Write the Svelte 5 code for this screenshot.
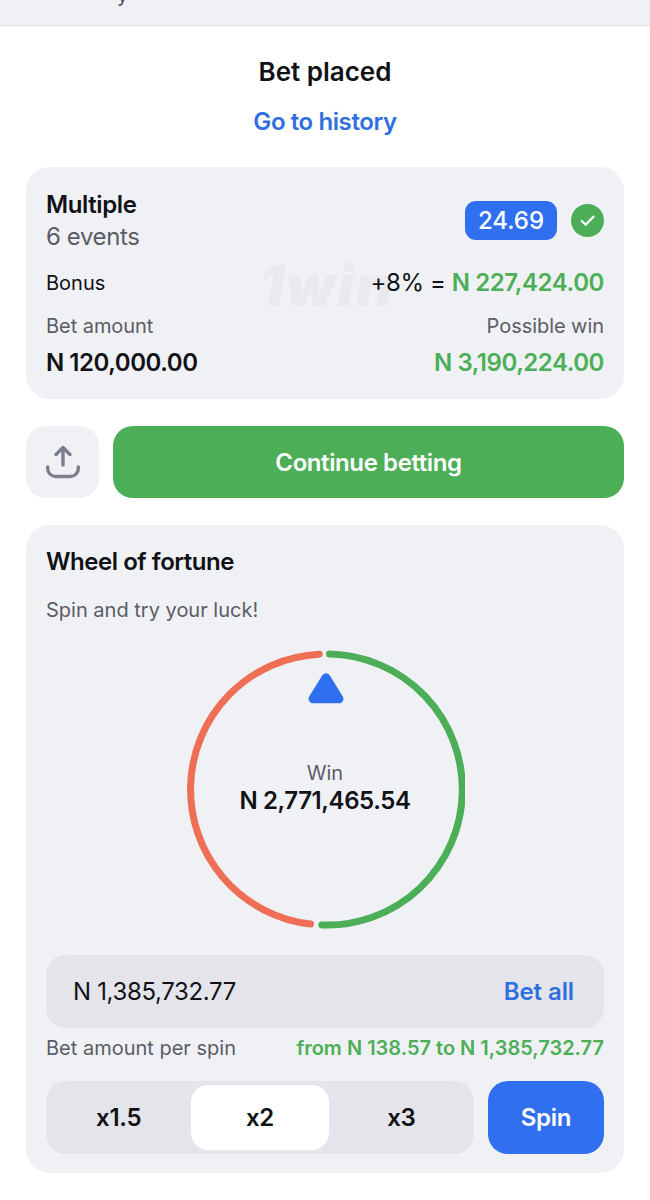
<script>
  const multipliers = ['x1.5', 'x2', 'x3'];
  let active = $state('x2');
</script>

<div class="page">
  <header class="topbar"><span class="crumb">y</span></header>

  <div class="head">
    <h1>Bet placed</h1>
    <a class="link" href="#history">Go to history</a>
  </div>

  <section class="card summary">
    <span class="mark">1win</span>
    <div class="row top">
      <div class="stack">
        <strong class="title">Multiple</strong>
        <span class="muted events">6 events</span>
      </div>
      <div class="odds">
        <span class="badge">24.69</span>
        <svg class="check" viewBox="0 0 33 33" aria-hidden="true">
          <circle cx="16.5" cy="16.5" r="16.5" fill="#4caf57" />
          <path d="M10.8 17l3.9 3.8 7.700-8" fill="none" stroke="#fff" stroke-width="2.300" stroke-linecap="round" stroke-linejoin="round" />
        </svg>
      </div>
    </div>
    <div class="row bonus">
      <span class="label">Bonus</span>
      <span class="sum">+8% = <b class="green">N 227,424.00</b></span>
    </div>
    <div class="row captions">
      <span class="muted">Bet amount</span>
      <span class="muted">Possible win</span>
    </div>
    <div class="row amounts">
      <b>N 120,000.00</b>
      <b class="green">N 3,190,224.00</b>
    </div>
  </section>

  <div class="actions">
    <button class="share" aria-label="Share">
      <svg viewBox="0 0 36 36" width="36" height="36" fill="none" stroke="#7d7e8b" stroke-width="3.400" stroke-linecap="round" stroke-linejoin="round" aria-hidden="true">
        <path d="M18 21V3.500M11 10.500L18 3.500l7 7" />
        <path d="M2.700 23v1.500a8 8 0 0 0 8 8h14.600a8 8 0 0 0 8-8V23" />
      </svg>
    </button>
    <button class="continue">Continue betting</button>
  </div>

  <section class="card wheel">
    <h2>Wheel of fortune</h2>
    <p class="muted tagline">Spin and try your luck!</p>

    <div class="dial">
      <svg viewBox="0 0 280 280" width="280" height="280" fill="none" stroke-width="7" stroke-linecap="round" aria-hidden="true">
        <path d="M144.500 5.050A135.500 135.500 0 1 1 136.800 275.930" stroke="#4caf57" />
        <path d="M134.200 5.170A135.500 135.500 0 0 0 125.500 275.100" stroke="#ee6f56" />
        <polygon points="141,28.800 154,49.800 128,49.800" fill="#306fef" stroke="#306fef" stroke-width="9" stroke-linejoin="round" />
      </svg>
      <div class="readout">
        <span class="muted">Win</span>
        <b>N 2,771,465.54</b>
      </div>
    </div>

    <div class="field">
      <span>N 1,385,732.77</span>
      <a class="link small" href="#all">Bet all</a>
    </div>

    <div class="row limits">
      <span class="muted">Bet amount per spin</span>
      <b class="green">from N 138.57 to N 1,385,732.77</b>
    </div>

    <div class="controls">
      <div class="segments">
        {#each multipliers as m}
          <button class="seg" class:on={active === m} onclick={() => (active = m)}>{m}</button>
        {/each}
      </div>
      <button class="spin">Spin</button>
    </div>
  </section>
</div>

<style>
  :global(body) {
    margin: 0;
    background: #fff;
  }

  .page {
    width: 650px;
    height: 1200px;
    overflow: hidden;
    font-family: Inter, "Liberation Sans", sans-serif;
    color: #111216;
    box-sizing: border-box;
  }

  .topbar {
    height: 25px;
    background: #f0f1f5;
    border-bottom: 1px solid #dfe0e6;
    position: relative;
    overflow: hidden;
  }

  .crumb {
    position: absolute;
    left: 117px;
    top: -17px;
    font-size: 20px;
    color: #55565e;
  }

  .head {
    display: flex;
    flex-direction: column;
    align-items: center;
    padding-top: 28px;
  }

  h1 {
    margin: 0;
    font-size: 26px;
    line-height: 36px;
    font-weight: 600;
  }

  .link {
    color: #306fe0;
    font-weight: 600;
    text-decoration: none;
  }

  .head .link {
    margin-top: 17px;
    font-size: 24px;
    line-height: 30px;
    letter-spacing: -0.4px;
  }

  .card {
    margin: 0 26px;
    background: #f0f1f5;
    border-radius: 24px;
    box-sizing: border-box;
    padding: 0 20px;
  }

  .summary {
    margin-top: 30px;
    height: 232px;
    position: relative;
    padding-top: 23px;
  }

  .mark {
    position: absolute;
    left: 233px;
    top: 94px;
    font-size: 56px;
    line-height: 50px;
    font-weight: 900;
    font-style: italic;
    letter-spacing: 2px;
    color: #e9eaee;
  }

  .row {
    display: flex;
    justify-content: space-between;
    align-items: center;
    position: relative;
  }

  .stack {
    display: flex;
    flex-direction: column;
  }

  .title {
    font-size: 24px;
    line-height: 30px;
    font-weight: 600;
    letter-spacing: -0.4px;
  }

  .muted {
    color: #5b5c65;
  }

  .events {
    font-size: 24px;
    line-height: 32px;
    margin-top: 1px;
    letter-spacing: -0.4px;
  }

  .odds {
    display: flex;
    align-items: center;
    gap: 14px;
    margin-top: -3px;
  }

  .badge {
    width: 92px;
    height: 39px;
    border-radius: 11px;
    background: #306fef;
    color: #fff;
    font-size: 24px;
    font-weight: 500;
    display: flex;
    align-items: center;
    justify-content: center;
  }

  .check {
    width: 33px;
    height: 33px;
  }

  .bonus {
    margin-top: 14px;
    font-size: 20px;
    line-height: 32px;
  }

  .sum {
    font-size: 24px;
    letter-spacing: -0.4px;
  }

  .green {
    color: #4caf57;
    font-weight: 600;
  }

  .captions {
    margin-top: 12px;
    font-size: 20px;
    line-height: 30px;
    letter-spacing: -0.05px;
  }

  .amounts {
    margin-top: 4px;
    font-size: 24px;
    line-height: 36px;
    letter-spacing: -0.45px;
  }

  .amounts b {
    font-weight: 600;
  }

  .actions {
    display: flex;
    gap: 14px;
    margin: 27px 26px 0;
    height: 72px;
  }

  button {
    border: 0;
    font-family: inherit;
    cursor: pointer;
    padding: 0;
  }

  .share {
    width: 73px;
    border-radius: 20px;
    background: #f0f1f5;
    display: flex;
    align-items: center;
    justify-content: center;
  }

  .continue {
    flex: 1;
    border-radius: 20px;
    background: #4caf57;
    color: #fff;
    font-size: 24px;
    font-weight: 600;
    letter-spacing: -0.4px;
  }

  .wheel {
    margin-top: 27px;
    height: 648px;
    padding-top: 21px;
  }

  h2 {
    margin: 0;
    font-size: 24px;
    line-height: 32px;
    font-weight: 600;
    letter-spacing: -0.45px;
  }

  .tagline {
    margin: 17px 0 0;
    font-size: 20px;
    line-height: 30px;
  }

  .dial {
    position: relative;
    width: 280px;
    height: 280px;
    margin: 24px auto 0;
  }

  .dial svg {
    display: block;
  }

  .readout {
    position: absolute;
    inset: 0 0 5px 0;
    display: flex;
    flex-direction: column;
    align-items: center;
    justify-content: center;
    font-size: 20px;
    line-height: 28px;
  }

  .readout b {
    font-size: 24px;
    line-height: 28px;
    font-weight: 600;
    letter-spacing: -0.4px;
  }

  .field {
    margin-top: 26px;
    height: 73px;
    border-radius: 20px;
    background: #e4e5ea;
    padding: 0 30px 0 27px;
    display: flex;
    align-items: center;
    justify-content: space-between;
    font-size: 24px;
    letter-spacing: -0.35px;
  }

  .link.small {
    font-size: 24px;
    letter-spacing: -0.1px;
  }

  .limits {
    margin-top: 5px;
    font-size: 20px;
    line-height: 30px;
  }

  .controls {
    display: flex;
    gap: 14px;
    margin-top: 18px;
    height: 73px;
  }

  .segments {
    flex: 1;
    display: grid;
    grid-template-columns: repeat(3, 1fr);
    gap: 4px;
    padding: 4px;
    background: #e4e5ea;
    border-radius: 20px;
  }

  .seg {
    background: transparent;
    border-radius: 17px;
    font-size: 24px;
    font-weight: 600;
    color: #111216;
    letter-spacing: -0.3px;
  }

  .seg.on {
    background: #fff;
  }

  .spin {
    width: 116px;
    border-radius: 20px;
    background: #306fef;
    color: #fff;
    font-size: 24px;
    font-weight: 600;
    letter-spacing: -0.3px;
  }
</style>
